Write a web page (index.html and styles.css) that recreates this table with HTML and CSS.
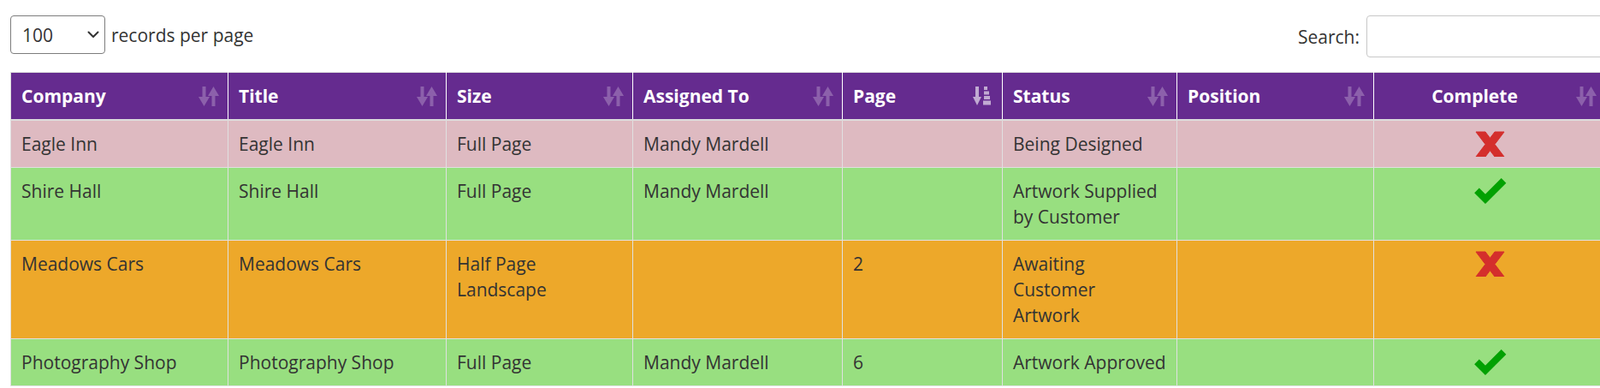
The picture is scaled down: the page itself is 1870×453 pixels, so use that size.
FILE: index.html
```html
<!DOCTYPE html>
<html lang="en">
<head>
<meta charset="utf-8">
<title>Adverts</title>
<link rel="stylesheet" href="styles.css">
</head>
<body>
<div class="wrap">
  <div class="controls">
    <label class="length">
      <span class="select-box">
        <select class="select"><option>100</option><option>50</option><option>25</option><option>10</option></select>
        <svg class="chev" viewBox="0 0 14 9" width="14" height="9"><path d="M1.5 1.5 7 7l5.5-5.5" fill="none" stroke="#333" stroke-width="2" stroke-linecap="round" stroke-linejoin="round"/></svg>
      </span>
      <span>records per page</span>
    </label>
    <label class="search">
      <span>Search:</span>
      <input class="search-input" type="search">
    </label>
  </div>

  <table class="grid">
    <colgroup>
      <col class="c1"><col class="c2"><col class="c3"><col class="c4"><col class="c5"><col class="c6"><col class="c7"><col class="c8">
    </colgroup>
    <thead>
      <tr>
        <th><div class="th-in"><span>Company</span><svg class="sort" viewBox="0 0 24 23" width="24" height="23"><g fill="#fff" opacity=".25"><rect x="4.5" y="0" width="4" height="13"/><polygon points="0,12 13,12 6.5,23"/><polygon points="11,11 24,11 17.5,0"/><rect x="15.5" y="10" width="4" height="13"/></g></svg></div></th>
        <th><div class="th-in"><span>Title</span><svg class="sort" viewBox="0 0 24 23" width="24" height="23"><g fill="#fff" opacity=".25"><rect x="4.5" y="0" width="4" height="13"/><polygon points="0,12 13,12 6.5,23"/><polygon points="11,11 24,11 17.5,0"/><rect x="15.5" y="10" width="4" height="13"/></g></svg></div></th>
        <th><div class="th-in"><span>Size</span><svg class="sort" viewBox="0 0 24 23" width="24" height="23"><g fill="#fff" opacity=".25"><rect x="4.5" y="0" width="4" height="13"/><polygon points="0,12 13,12 6.5,23"/><polygon points="11,11 24,11 17.5,0"/><rect x="15.5" y="10" width="4" height="13"/></g></svg></div></th>
        <th><div class="th-in"><span>Assigned To</span><svg class="sort" viewBox="0 0 24 23" width="24" height="23"><g fill="#fff" opacity=".25"><rect x="4.5" y="0" width="4" height="13"/><polygon points="0,12 13,12 6.5,23"/><polygon points="11,11 24,11 17.5,0"/><rect x="15.5" y="10" width="4" height="13"/></g></svg></div></th>
        <th><div class="th-in"><span>Page</span><svg class="sort" viewBox="0 0 24 23" width="24" height="23"><g fill="#fff" opacity=".6"><rect x="3" y="0" width="4" height="13"/><polygon points="0,12 10,12 5,22"/><rect x="13" y="0" width="4" height="4"/><rect x="13" y="5.5" width="6" height="4"/><rect x="13" y="11" width="7" height="4"/><rect x="12" y="16.5" width="9" height="5"/></g></svg></div></th>
        <th><div class="th-in"><span>Status</span><svg class="sort" viewBox="0 0 24 23" width="24" height="23"><g fill="#fff" opacity=".25"><rect x="4.5" y="0" width="4" height="13"/><polygon points="0,12 13,12 6.5,23"/><polygon points="11,11 24,11 17.5,0"/><rect x="15.5" y="10" width="4" height="13"/></g></svg></div></th>
        <th><div class="th-in"><span>Position</span><svg class="sort" viewBox="0 0 24 23" width="24" height="23"><g fill="#fff" opacity=".25"><rect x="4.5" y="0" width="4" height="13"/><polygon points="0,12 13,12 6.5,23"/><polygon points="11,11 24,11 17.5,0"/><rect x="15.5" y="10" width="4" height="13"/></g></svg></div></th>
        <th class="th-complete"><div class="th-in"><span class="th-center">Complete</span><svg class="sort" viewBox="0 0 24 23" width="24" height="23"><g fill="#fff" opacity=".25"><rect x="4.5" y="0" width="4" height="13"/><polygon points="0,12 13,12 6.5,23"/><polygon points="11,11 24,11 17.5,0"/><rect x="15.5" y="10" width="4" height="13"/></g></svg></div></th>
      </tr>
    </thead>
    <tbody>
      <tr class="row-pink">
        <td>Eagle Inn</td>
        <td>Eagle Inn</td>
        <td>Full Page</td>
        <td>Mandy Mardell</td>
        <td></td>
        <td>Being Designed</td>
        <td></td>
        <td class="center"><svg class="icon-no" viewBox="0 0 35 30" width="35" height="30"><polygon points="1,1 12,1 17.5,8.25 23,1 34,1 23,15.5 34,30 23,30 17.5,22.75 12,30 1,30 12,15.5" fill="#d42f2c" stroke="#d42f2c" stroke-width="1" stroke-linejoin="round"/></svg></td>
      </tr>
      <tr class="row-green">
        <td>Shire Hall</td>
        <td>Shire Hall</td>
        <td>Full Page</td>
        <td>Mandy Mardell</td>
        <td></td>
        <td>Artwork Supplied by Customer</td>
        <td></td>
        <td class="center"><svg class="icon-yes" viewBox="0 0 39 30" width="39" height="30"><polyline points="4,14.3 14,24.3 35.5,2.8" fill="none" stroke="#02a102" stroke-width="8" stroke-linejoin="miter"/></svg></td>
      </tr>
      <tr class="row-orange">
        <td>Meadows Cars</td>
        <td>Meadows Cars</td>
        <td>Half Page Landscape</td>
        <td></td>
        <td>2</td>
        <td>Awaiting Customer Artwork</td>
        <td></td>
        <td class="center"><svg class="icon-no" viewBox="0 0 35 30" width="35" height="30"><polygon points="1,1 12,1 17.5,8.25 23,1 34,1 23,15.5 34,30 23,30 17.5,22.75 12,30 1,30 12,15.5" fill="#d42f2c" stroke="#d42f2c" stroke-width="1" stroke-linejoin="round"/></svg></td>
      </tr>
      <tr class="row-green">
        <td>Photography Shop</td>
        <td>Photography Shop</td>
        <td>Full Page</td>
        <td>Mandy Mardell</td>
        <td>6</td>
        <td>Artwork Approved</td>
        <td></td>
        <td class="center"><svg class="icon-yes" viewBox="0 0 39 30" width="39" height="30"><polyline points="4,14.3 14,24.3 35.5,2.8" fill="none" stroke="#02a102" stroke-width="8" stroke-linejoin="miter"/></svg></td>
      </tr>
    </tbody>
  </table>
</div>
</body>
</html>
```

FILE: styles.css
```css
html {
  overflow: hidden;
}

body {
  margin: 0;
  background: #fff;
  color: #333;
  font-family: "Open Sans", "Noto Sans", "Liberation Sans", sans-serif;
  font-size: 21px;
  line-height: 30px;
}

.wrap {
  width: 1864px;
  padding: 18px 0 0 12px;
}

.controls {
  display: flex;
  justify-content: space-between;
  align-items: flex-start;
  margin-bottom: 17px;
}

.length,
.search {
  display: inline-flex;
  align-items: center;
}

.length {
  gap: 7px;
}

.search {
  gap: 8px;
}

.select-box {
  position: relative;
  display: inline-block;
}

.select {
  appearance: none;
  -webkit-appearance: none;
  display: block;
  width: 111px;
  height: 45px;
  margin: 0;
  padding: 0 30px 0 13px;
  border: 1px solid #7d7d7d;
  border-radius: 4px;
  background: #fff;
  color: #333;
  font-family: inherit;
  font-size: 21px;
}

.chev {
  position: absolute;
  right: 7px;
  top: 18px;
  pointer-events: none;
}

.search-input {
  display: block;
  width: 279px;
  height: 49px;
  box-sizing: border-box;
  margin: 0;
  padding: 0 12px;
  border: 1px solid #c8c8c8;
  border-radius: 4px;
  background: #fff;
  font-family: inherit;
  font-size: 21px;
}

.grid {
  width: 1864px;
  table-layout: fixed;
  border-collapse: collapse;
}

.c1 { width: 254px; }
.c2 { width: 255px; }
.c3 { width: 218px; }
.c4 { width: 245px; }
.c5 { width: 187px; }
.c6 { width: 204px; }
.c7 { width: 230px; }
.c8 { width: 271px; }

.grid th {
  background: #652b8f;
  color: #fff;
  font-weight: 700;
  text-align: left;
  padding: 12px 10px 12px 12px;
  border: 1px solid #fff;
  border-top-color: #dcdcdc;
  border-bottom: 2px solid #dcdcdc;
  vertical-align: middle;
}

.grid th:first-child {
  border-left-color: #dcdcdc;
}

.th-in {
  display: flex;
  align-items: center;
  justify-content: space-between;
  gap: 8px;
}

.sort {
  display: block;
  flex: none;
}

.th-complete {
  padding-right: 16px;
}

.th-center {
  flex: 1;
  text-align: center;
  margin-right: 5px;
}

.grid td {
  padding: 12px;
  border: 1px solid #e0e0e0;
  vertical-align: top;
}

.grid td.center {
  text-align: center;
}

.icon-no,
.icon-yes {
  display: block;
  margin: 0 auto;
}

.row-pink td {
  background: #debac1;
}

.row-green td {
  background: #98df80;
}

.row-orange td {
  background: #eda82a;
}
```
